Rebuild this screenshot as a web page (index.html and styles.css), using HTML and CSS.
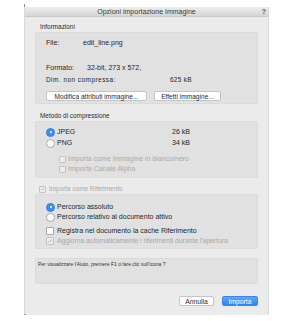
FILE: index.html
```html
<!DOCTYPE html>
<html>
<head>
<meta charset="utf-8">
<link rel="stylesheet" href="styles.css">
</head>
<body>
<div class="dialog">
  <div class="titlebar"><span class="title">Opzioni importazione Immagine</span><span class="help">?</span></div>
  <div class="content">
    <div class="label">Informazioni</div>
    <div class="group g1">
      <div class="row r-file"><span class="k1">File:</span><span>edit_line.png</span></div>
      <div class="row r-fmt"><span class="k2">Formato:</span><span>32-bit, 273 x 572,</span></div>
      <div class="row r-dim small"><span class="k3">Dim. non compressa:</span><span>625 kB</span></div>
      <div class="btnrow">
        <span class="btn b1">Modifica attributi immagine...</span>
        <span class="btn b2">Effetti immagine...</span>
      </div>
    </div>

    <div class="label l2">Metodo di compressione</div>
    <div class="group g2">
      <div class="row opt r-jpeg"><span class="radio on"></span><span class="otext">JPEG</span><span class="size">26 kB</span></div>
      <div class="row opt r-png"><span class="radio"></span><span class="otext">PNG</span><span class="size">34 kB</span></div>
      <div class="row sub dis r-bn"><span class="check"></span><span>Importa come immagine in bianco/nero</span></div>
      <div class="row sub dis"><span class="check"></span><span>Importa Canale Alpha</span></div>
    </div>

    <div class="row refrow dis"><span class="check checked"><svg viewBox="0 0 8 8" width="8" height="8"><path d="M1.8 4.2 L3.4 5.8 L6.2 2" fill="none" stroke="#a9a9a9" stroke-width="1"/></svg></span><span class="small">Importa come Riferimento</span></div>
    <div class="group g3">
      <div class="row opt r-abs"><span class="radio on"></span><span class="otext">Percorso assoluto</span></div>
      <div class="row opt"><span class="radio"></span><span class="otext">Percorso relativo al documento attivo</span></div>
      <div class="row opt r-reg"><span class="check big"></span><span class="otext">Registra nel documento la cache Riferimento</span></div>
      <div class="row opt dis r-agg"><span class="check big checked"><svg viewBox="0 0 8 8" width="8" height="8"><path d="M1.8 4.2 L3.4 5.8 L6.2 2" fill="none" stroke="#a9a9a9" stroke-width="1"/></svg></span><span class="otext">Aggiorna automaticamente i riferimenti durante l'apertura</span></div>
    </div>

    <div class="helpbox">Per visualizzare l'Aiuto, premere F1 o fare clic sull'icona ?</div>

    <div class="actions">
      <span class="btn cancel">Annulla</span>
      <span class="btn primary">Importa</span>
    </div>
  </div>
</div>
</body>
</html>
```

FILE: styles.css
```css
* { box-sizing: border-box; }
html, body { margin: 0; padding: 0; background: #ffffff; }
body {
  font-family: "Liberation Sans", Arial, sans-serif;
  color: #262626;
  font-size: 7px;
}
.dialog {
  position: relative;
  width: 245px;
  height: 308px;
  margin: 7px 0 0 24px;
  background: #ebebeb;
  border-left: 1px solid #d9d9d9;
  border-right: 1px solid #d9d9d9;
}
.dialog::before {
  content: "";
  position: absolute;
  left: -1px; top: -3px;
  width: 1px; height: 3px;
  background: #8a8a8a;
}
.dialog::after {
  content: "";
  position: absolute;
  left: -1px; bottom: -1px;
  width: 2px; height: 2px;
  background: #9a9a9a;
}
.titlebar {
  height: 10px;
  background: linear-gradient(#ededed, #d6d6d6);
  border-bottom: 1px solid #c8c8c8;
  display: flex;
  align-items: center;
  justify-content: center;
  position: relative;
  font-size: 7px;
  color: #3a3a3a;
  line-height: 10px;
}
.help {
  position: absolute;
  right: 2px;
  top: 0;
  font-weight: bold;
  color: #555;
  font-size: 7px;
}
.content {
  padding: 0 10px 0 10px;
}
.label {
  font-size: 6.4px;
  height: 10px;
  line-height: 10px;
  margin-top: 5px;
  padding-left: 5px;
  color: #2a2a2a;
}
.l2 { margin-top: 7px; }
.group {
  background: #e1e1e1;
  border-radius: 2px;
  border: 1px solid #dbdbdb;
}
.g1 { height: 72px; padding: 5px 0 0 10px; }
.row {
  height: 10px;
  line-height: 10px;
  display: flex;
  align-items: center;
  white-space: nowrap;
}
.k1 { width: 37px; }
.k2 { width: 41px; }
.k3 { width: 124px; }
.r-fmt { margin-top: 15px; }
.r-dim { margin-top: 2px; }
.small { font-size: 6.4px; letter-spacing: 0.3px; }
.r-dim .k3 { letter-spacing: 0.5px; }
.btnrow {
  display: flex;
  gap: 7px;
  margin-top: 6px;
}
.btn {
  display: inline-flex;
  align-items: center;
  justify-content: center;
  height: 10px;
  background: #ffffff;
  border: 1px solid #c4c4c4;
  border-radius: 2px;
  font-size: 6.6px;
  color: #2a2a2a;
}
.b1 { width: 101px; }
.b2 { width: 67px; }

.g2 { height: 57px; padding: 5px 0 0 10px; }
.opt .otext { margin-left: 2px; }
.radio {
  width: 9px; height: 9px;
  border-radius: 50%;
  background: #ffffff;
  border: 1px solid #a8a8a8;
  flex: none;
  position: relative;
}
.radio.on {
  background: #3b8ff3;
  border-color: #3580e0;
}
.radio.on::after {
  content: "";
  position: absolute;
  left: 2.5px; top: 2.5px;
  width: 2px; height: 2px;
  border-radius: 50%;
  background: #ffffff;
}
.size { position: absolute; }
.r-jpeg, .r-png { position: relative; }
.r-jpeg .size, .r-png .size { left: 126px; }
.r-png { margin-top: 1px; }
.sub { padding-left: 13px; }
.r-bn { margin-top: 6px; }
.check {
  width: 7px; height: 7px;
  border: 1px solid #c3c3c3;
  background: #ececec;
  border-radius: 1px;
  flex: none;
  margin-right: 2px;
  display: inline-flex;
  align-items: center;
  justify-content: center;
}
.check svg { display: block; width: 6px; height: 6px; }
.check.big { width: 8px; height: 8px; background: #ffffff; border-color: #a8a8a8; margin-right: 1px; }
.dis .check.big { background: #ececec; border-color: #c3c3c3; }
.dis { color: #a9a9a9; }
.refrow { margin-top: 6px; padding-left: 4px; }
.refrow .check { margin-right: 3px; }
.refrow .small { letter-spacing: 0; }

.g3 { height: 55px; padding: 7px 0 0 10px; }
.r-reg { margin-top: 4px; }
.r-agg .otext { letter-spacing: -0.1px; }

.helpbox {
  margin-top: 9px;
  height: 26px;
  background: #e1e1e1;
  border: 1px solid #dbdbdb;
  border-radius: 2px;
  font-size: 5px;
  padding: 2px 0 0 2px;
  line-height: 6px;
  color: #333;
}
.actions {
  display: flex;
  justify-content: flex-end;
  gap: 8px;
  margin-top: 12px;
}
.cancel { width: 35px; height: 10px; font-size: 6.8px; }
.primary {
  width: 36px; height: 10px;
  background: linear-gradient(#5da6fa, #2f83f2);
  border-color: #3a86ea;
  color: #ffffff;
  font-size: 6.8px;
}
```
